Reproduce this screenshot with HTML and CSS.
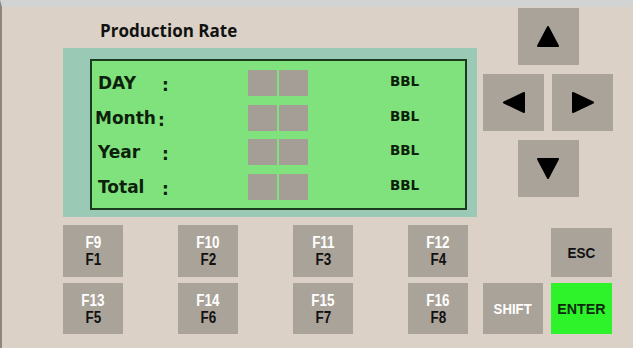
FILE: index.html
```html
<!DOCTYPE html>
<html lang="en">
<head>
    <meta charset="UTF-8">
    <title>Production Rate</title>
    <link rel="stylesheet" href="styles.css">
</head>
<body>
    <div class="device">
        <div class="top">
            <div class="left">
                <h1 class="title">Production Rate</h1>
                <div class="screen">
                    <div class="lcd">
                        <div class="row">
                            <span class="label">DAY</span><span class="colon">:</span>
                            <span class="digits"><span class="cell"></span><span class="cell"></span></span>
                            <span class="unit">BBL</span>
                        </div>
                        <div class="row">
                            <span class="label label-month">Month</span><span class="colon colon-month">:</span>
                            <span class="digits"><span class="cell"></span><span class="cell"></span></span>
                            <span class="unit">BBL</span>
                        </div>
                        <div class="row">
                            <span class="label">Year</span><span class="colon">:</span>
                            <span class="digits"><span class="cell"></span><span class="cell"></span></span>
                            <span class="unit">BBL</span>
                        </div>
                        <div class="row">
                            <span class="label">Total</span><span class="colon">:</span>
                            <span class="digits"><span class="cell"></span><span class="cell"></span></span>
                            <span class="unit">BBL</span>
                        </div>
                    </div>
                </div>
            </div>

            <div class="pad">
                <div class="key arrow">
                    <svg width="24" height="23" viewBox="0 0 24 23"><polygon points="12,2 22,21 2,21" fill="#000" stroke="#000" stroke-width="2" stroke-linejoin="round"/></svg>
                </div>
                <div class="pad-mid">
                    <div class="key arrow">
                        <svg width="24" height="23" viewBox="0 0 24 23"><polygon points="2,11.5 22,2 22,21" fill="#000" stroke="#000" stroke-width="2" stroke-linejoin="round"/></svg>
                    </div>
                    <div class="key arrow">
                        <svg width="24" height="23" viewBox="0 0 24 23"><polygon points="22,11.5 2,2 2,21" fill="#000" stroke="#000" stroke-width="2" stroke-linejoin="round"/></svg>
                    </div>
                </div>
                <div class="key arrow">
                    <svg width="24" height="23" viewBox="0 0 24 23"><polygon points="12,21 22,2 2,2" fill="#000" stroke="#000" stroke-width="2" stroke-linejoin="round"/></svg>
                </div>
            </div>
        </div>

        <div class="keys">
            <div class="col">
                <div class="key fkey"><span class="hi">F9</span><span class="lo">F1</span></div>
                <div class="key fkey low"><span class="hi">F13</span><span class="lo">F5</span></div>
            </div>
            <div class="col">
                <div class="key fkey"><span class="hi">F10</span><span class="lo">F2</span></div>
                <div class="key fkey low"><span class="hi">F14</span><span class="lo">F6</span></div>
            </div>
            <div class="col">
                <div class="key fkey"><span class="hi">F11</span><span class="lo">F3</span></div>
                <div class="key fkey low"><span class="hi">F15</span><span class="lo">F7</span></div>
            </div>
            <div class="col">
                <div class="key fkey"><span class="hi">F12</span><span class="lo">F4</span></div>
                <div class="key fkey low"><span class="hi">F16</span><span class="lo">F8</span></div>
            </div>
            <div class="col col-shift">
                <div class="key fkey low shift"><span>SHIFT</span></div>
            </div>
            <div class="col col-esc">
                <div class="key esc"><span>ESC</span></div>
                <div class="key fkey low enter"><span>ENTER</span></div>
            </div>
        </div>
    </div>
</body>
</html>
```

FILE: styles.css
```css
body {
    margin: 0;
    background: #dcd1c6;
    font-family: "DejaVu Sans", sans-serif;
}
.device {
    height: 348px;
    box-sizing: border-box;
    border-top: 7px solid #d2d3d3;
    border-left: 2px solid #8e857f;
    background: #dcd1c6;
}
.top {
    display: flex;
}
.left {
    margin-left: 61px;
}
.title {
    margin: 13px 0 6px 37px;
    font-family: "Open Sans", sans-serif;
    font-size: 17px;
    line-height: 22px;
    font-weight: bold;
    color: #111;
}
.screen {
    width: 414px;
    height: 169px;
    box-sizing: border-box;
    background: #9acab5;
    padding: 11px 10px 7px 27px;
}
.lcd {
    height: 151px;
    box-sizing: border-box;
    border: 2px solid #1c3a1c;
    background: #80e27c;
    padding: 9px 0 0 6px;
    display: flex;
    flex-direction: column;
    gap: 8.5px;
}
.row {
    display: grid;
    grid-template-columns: 64px 86px 60px 1fr;
    align-items: center;
    height: 26px;
    color: #0d1f0d;
}
.label {
    font-size: 17px;
    font-weight: bold;
    white-space: nowrap;
}
.label-month {
    margin-left: -3px;
}
.colon {
    font-size: 17px;
    font-weight: bold;
    position: relative;
    top: 2px;
}
.colon-month {
    margin-left: -4px;
}
.digits {
    display: flex;
    gap: 2px;
}
.cell {
    width: 29px;
    height: 26px;
    background: #a59e96;
}
.unit {
    margin-left: 82px;
    font-size: 13.5px;
    font-weight: bold;
    position: relative;
    top: -2px;
}
.key {
    background: #aaa399;
    box-sizing: border-box;
}
.pad {
    margin: 1px 0 0 6px;
    width: 130px;
    display: flex;
    flex-direction: column;
    align-items: center;
    gap: 9px;
}
.pad-mid {
    display: flex;
    gap: 8px;
}
.arrow {
    width: 61px;
    height: 57px;
    display: flex;
    align-items: center;
    justify-content: center;
}
.keys {
    display: flex;
    margin: 8px 0 0 61px;
}
.col {
    display: flex;
    flex-direction: column;
    gap: 6px;
    margin-right: 55px;
}
.col-shift {
    margin-right: 8px;
    justify-content: flex-end;
    margin-left: -40px;
}
.col-esc {
    margin-right: 0;
}
.fkey {
    width: 60px;
    height: 52px;
    display: flex;
    flex-direction: column;
    align-items: center;
    justify-content: center;
    font-family: "Liberation Sans", sans-serif;
    font-weight: bold;
    font-size: 16px;
    line-height: 17px;
}
.fkey span {
    transform: scaleX(0.84);
}
.fkey.low {
    height: 51px;
}
.hi {
    color: #fff;
}
.lo {
    color: #111;
}
.shift {
    color: #fff;
    font-size: 15px;
}
.shift span {
    transform: scaleX(0.88);
}
.esc {
    width: 61px;
    height: 49px;
    margin-top: 3px;
    display: flex;
    align-items: center;
    justify-content: center;
    font-family: "Liberation Sans", sans-serif;
    font-weight: bold;
    font-size: 15px;
    color: #111;
}
.esc span {
    transform: scaleX(0.9);
}
.enter {
    width: 61px;
    background: #2ef22a;
    color: #0b2a0b;
    font-size: 15px;
}
.enter span {
    transform: scaleX(0.95);
}
```
